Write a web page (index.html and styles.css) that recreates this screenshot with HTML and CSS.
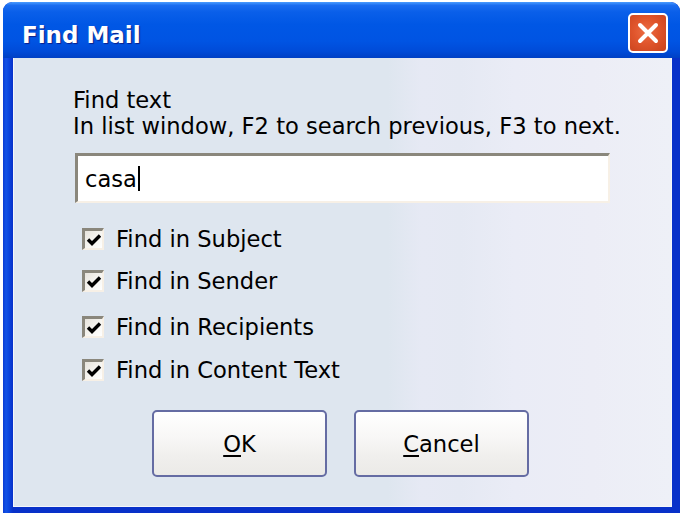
FILE: index.html
```html
<!DOCTYPE html>
<html>
<head>
<meta charset="utf-8">
<title>Find Mail</title>
<link rel="stylesheet" href="styles.css">
</head>
<body>
<div class="window">
  <div class="titlebar">
    <span class="title">Find Mail</span>
    <div class="close">
      <svg width="24" height="24" viewBox="0 0 24 24"><path d="M4 4 L20 20 M20 4 L4 20" stroke="#fff" stroke-width="4" stroke-linecap="round"/></svg>
    </div>
  </div>
  <div class="body">
    <div class="intro">
      <div>Find text</div>
      <div>In list window, F2 to search previous, F3 to next.</div>
    </div>
    <div class="input"><span>casa</span><span class="caret"></span></div>
    <div class="checks">
      <label class="check c1"><span class="box"><svg width="16" height="16" viewBox="0 0 16 16"><path d="M2 7.5 L6 11.5 L14 3.5" fill="none" stroke="#000" stroke-width="3.4"/></svg></span>Find in Subject</label>
      <label class="check c2"><span class="box"><svg width="16" height="16" viewBox="0 0 16 16"><path d="M2 7.5 L6 11.5 L14 3.5" fill="none" stroke="#000" stroke-width="3.4"/></svg></span>Find in Sender</label>
      <label class="check c3"><span class="box"><svg width="16" height="16" viewBox="0 0 16 16"><path d="M2 7.5 L6 11.5 L14 3.5" fill="none" stroke="#000" stroke-width="3.4"/></svg></span>Find in Recipients</label>
      <label class="check c4"><span class="box"><svg width="16" height="16" viewBox="0 0 16 16"><path d="M2 7.5 L6 11.5 L14 3.5" fill="none" stroke="#000" stroke-width="3.4"/></svg></span>Find in Content Text</label>
    </div>
    <div class="buttons">
      <div class="btn"><span class="ul">O</span>K</div>
      <div class="btn"><span class="ul">C</span>ancel</div>
    </div>
  </div>
</div>
</body>
</html>
```
FILE: styles.css
```css
html, body {
  margin: 0;
  padding: 0;
  background: #ffffff;
  overflow: hidden;
}
.window {
  margin: 2px 0 0 3px;
  width: 677px;
  height: 511px;
  border-radius: 9px 9px 0 0;
  background: linear-gradient(to right, #0a3cd4 0, #1352e6 3px, #0b45de 6px, #0831c9 10px);
  display: flex;
  flex-direction: column;
  overflow: hidden;
}
.titlebar {
  height: 56px;
  flex: none;
  display: flex;
  align-items: center;
  justify-content: space-between;
  padding: 0 12px 0 19px;
  background: linear-gradient(to bottom, #4a9cff 0, #1a6cf0 6%, #0a5fe9 18%, #0057e5 40%, #0054e3 70%, #004bd8 88%, #0040c4 100%);
  border-radius: 9px 9px 0 0;
}
.title {
  font-family: "DejaVu Sans", sans-serif;
  font-weight: bold;
  font-size: 23px;
  color: #fff;
  text-shadow: 1px 1px 1px #0b1f8a;
  margin-top: 9px;
}
.close {
  width: 36px;
  height: 36px;
  border: 2px solid #fff;
  border-radius: 5px;
  background: radial-gradient(circle at 45% 45%, #ec6d44 0, #e0552c 45%, #c8421d 100%);
  display: flex;
  align-items: center;
  justify-content: center;
  margin-top: 6px;
}
.body {
  flex: none;
  height: 448px;
  margin: 0 8px 0 10px;
  border-left: 1px solid #f4f6fb;
  border-right: 1px solid #f4f6fb;
  border-bottom: 1px solid #f4f6fb;
  background: linear-gradient(to right, #dee6ef 0, #dee6ef 57%, #e6e9f4 62%, #e5e9f3 68%, #eaecf6 76%, #ecedf6 88%, #eef0f7 100%);
  font-family: "DejaVu Sans", sans-serif;
  font-size: 22.6px;
  color: #000;
  display: flex;
  flex-direction: column;
}
.intro {
  margin: 29px 0 0 59px;
  line-height: 26px;
}
.input {
  margin: 14px 0 0 61px;
  width: 523px;
  height: 45px;
  background: #fff;
  border-top: 3px solid #8a877c;
  border-left: 3px solid #8a877c;
  border-bottom: 2px solid #f7f0e6;
  border-right: 2px solid #f7f0e6;
  display: flex;
  align-items: center;
  padding-left: 7px;
}
.caret {
  display: inline-block;
  width: 2px;
  height: 25px;
  background: #000;
  margin-left: 1px;
}
.checks {
  display: flex;
  flex-direction: column;
  margin: 23px 0 0 68px;
}
.check {
  display: flex;
  align-items: center;
  height: 26px;
}
.c2 { margin-top: 16px; }
.c3 { margin-top: 20px; }
.c4 { margin-top: 17px; }
.box {
  width: 17px;
  height: 17px;
  border-top: 3px solid #8a877c;
  border-left: 3px solid #8a877c;
  border-bottom: 2px solid #f7f0e6;
  border-right: 2px solid #f7f0e6;
  background: linear-gradient(135deg, #e6e3dc 0, #f8f7f3 60%, #ffffff 100%);
  display: flex;
  align-items: center;
  justify-content: center;
  margin-right: 12px;
}
.buttons {
  display: flex;
  justify-content: center;
  gap: 27px;
  margin: 27px 0 0 -4px;
}
.btn {
  width: 171px;
  height: 63px;
  border: 2px solid #656ca3;
  border-radius: 5px;
  background: linear-gradient(to bottom, #ffffff 0, #f8f7f6 40%, #f0efed 70%, #ebeae7 100%);
  display: flex;
  align-items: center;
  justify-content: center;
}
.ul {
  text-decoration: underline;
  text-underline-offset: 3px;
}
```
